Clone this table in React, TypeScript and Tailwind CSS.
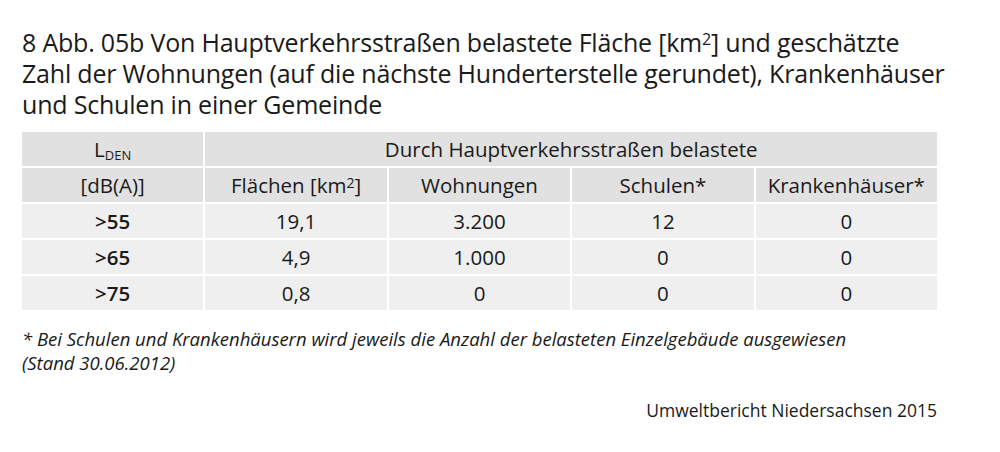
export default function App() {
  const rows = [
    { l: ">55", f: "19,1", w: "3.200", s: "12", k: "0" },
    { l: ">65", f: "4,9", w: "1.000", s: "0", k: "0" },
    { l: ">75", f: "0,8", w: "0", s: "0", k: "0" },
  ];
  const head = "bg-[#e1e1e1] flex items-center justify-center h-[34px]";
  const cell = "bg-[#efefef] flex items-center justify-center h-[34px]";

  return (
    <div className="w-[1000px] h-[452px] bg-white text-[#1a1a1a] px-[22px] pt-[27px] font-['Open_Sans',sans-serif]">
      <h1 className="text-[25px] leading-[31px] font-normal tracking-[-0.2px]">
        8 Abb. 05b Von Hauptverkehrsstraßen belastete Fläche [km<sup className="text-[16px] top-[-7px]">2</sup>] und geschätzte
        <br />
        Zahl der Wohnungen (auf die nächste Hunderterstelle gerundet), Krankenhäuser
        <br />
        und Schulen in einer Gemeinde
      </h1>

      <div className="mt-[12px] w-[915px] grid grid-cols-5 gap-[2px] text-[20.5px]">
        <div className={head}>
          <span>
            L<sub className="text-[13px] bottom-[-3px]">DEN</sub>
          </span>
        </div>
        <div className={`${head} col-span-4`}>Durch Hauptverkehrsstraßen belastete</div>

        <div className={head}>[dB(A)]</div>
        <div className={head}>
          <span>
            Flächen [km<sup className="text-[14px] top-[-5px]">2</sup>]
          </span>
        </div>
        <div className={head}>Wohnungen</div>
        <div className={head}>Schulen*</div>
        <div className={head}>Krankenhäuser*</div>

        {rows.map((r) => (
          <div key={r.l} className="contents">
            <div className={`${cell} font-semibold`}>{r.l}</div>
            <div className={cell}>{r.f}</div>
            <div className={cell}>{r.w}</div>
            <div className={cell}>{r.s}</div>
            <div className={cell}>{r.k}</div>
          </div>
        ))}
      </div>

      <p className="mt-[17px] text-[18.5px] leading-[24px] italic">
        * Bei Schulen und Krankenhäusern wird jeweils die Anzahl der belasteten Einzelgebäude ausgewiesen
        <br />
        (Stand 30.06.2012)
      </p>

      <p className="mt-[22px] w-[915px] text-right text-[17.5px]">Umweltbericht Niedersachsen 2015</p>
    </div>
  );
}
